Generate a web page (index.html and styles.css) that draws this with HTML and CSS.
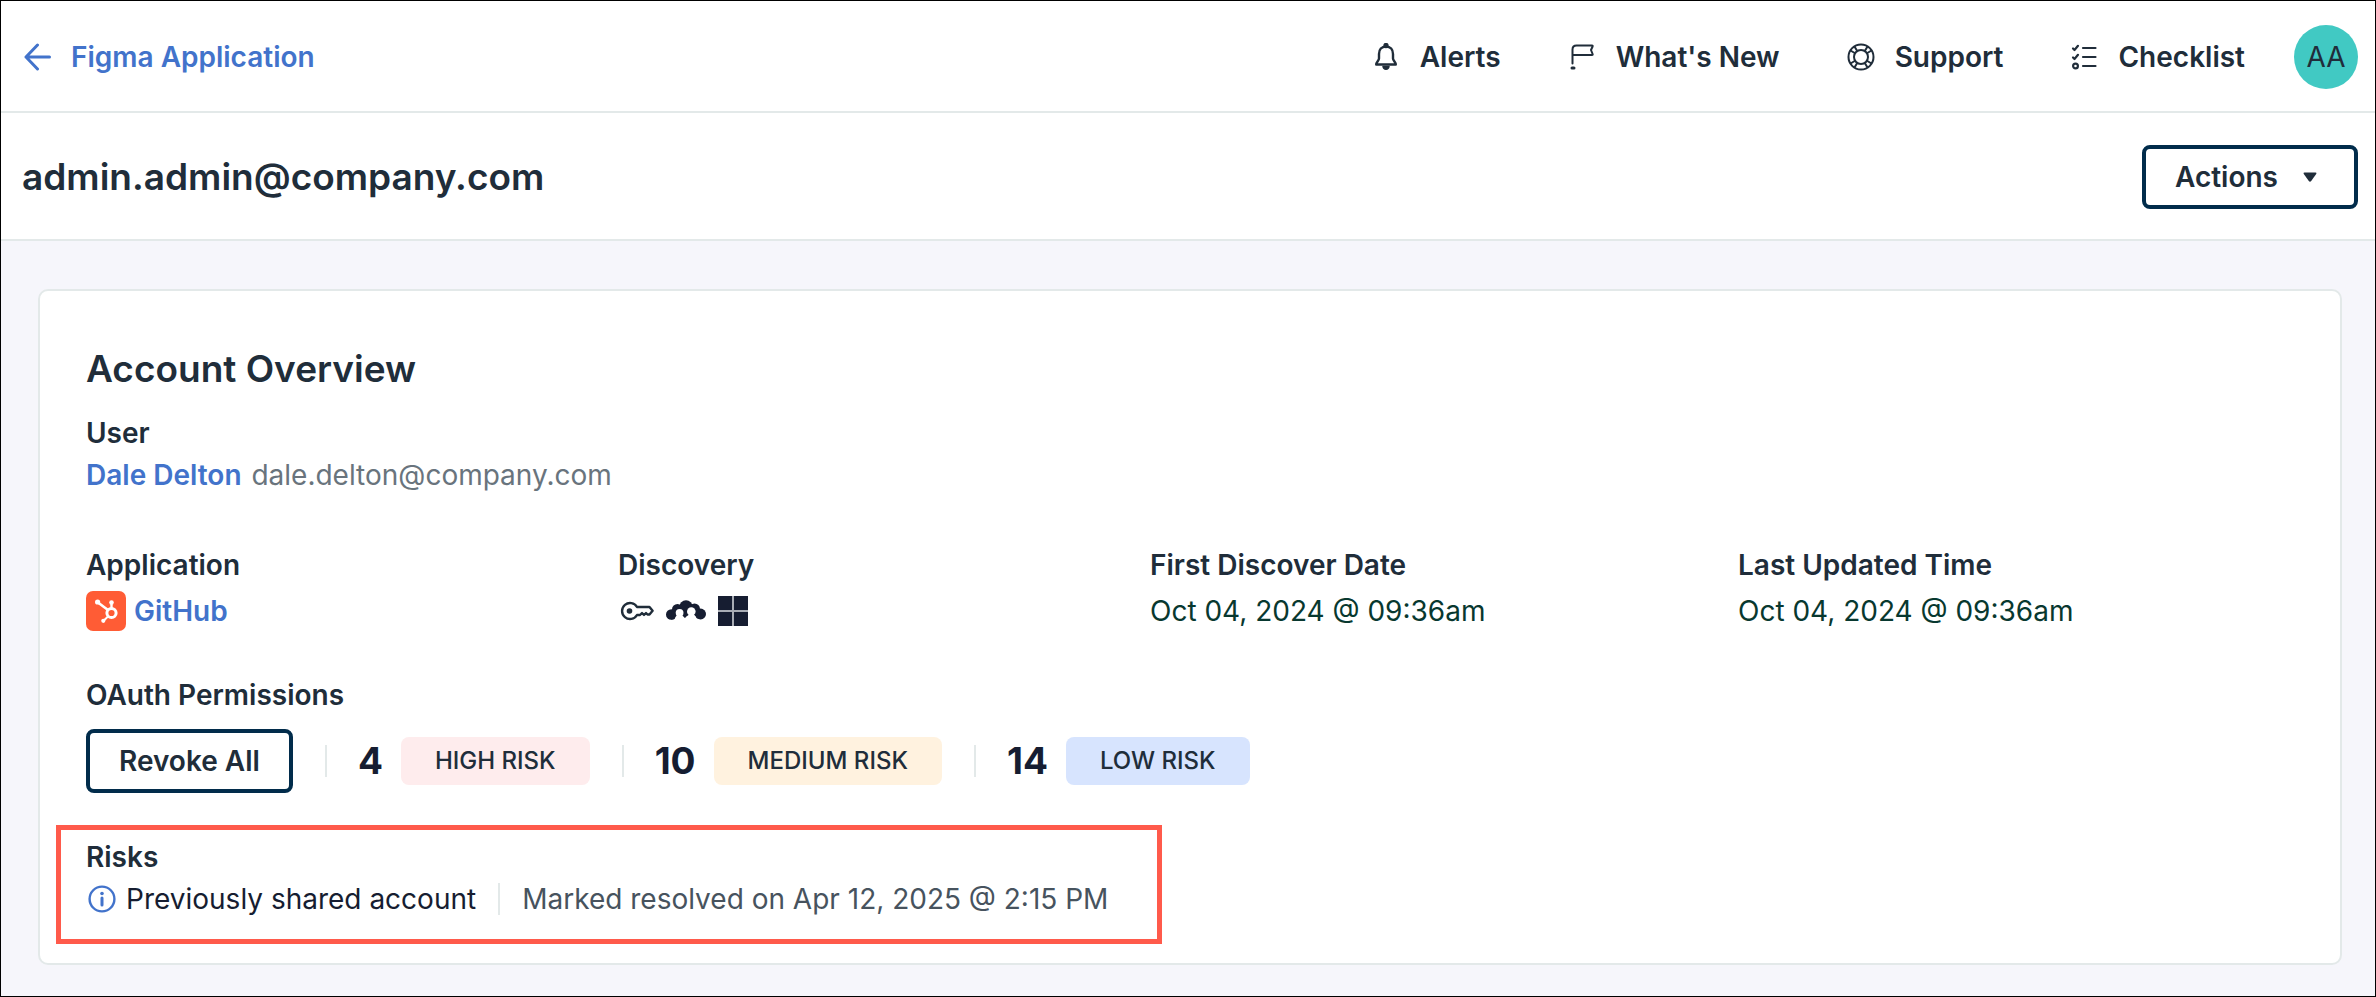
FILE: index.html
```html
<!DOCTYPE html>
<html lang="en">
<head>
<meta charset="utf-8">
<title>admin.admin@company.com</title>
<link rel="stylesheet" href="styles.css">
</head>
<body>
<header class="topbar">
  <a class="back" href="#">
    <svg class="icon" viewBox="0 0 28 28" fill="none" stroke="currentColor" stroke-width="3" stroke-linecap="round" stroke-linejoin="round" aria-hidden="true"><path d="M26.500 14H3M14.500 2 3 14 14.500 26"/></svg>
    Figma Application
  </a>
  <nav class="nav">
    <a class="nav-link" href="#">
      <svg class="icon" viewBox="0 0 28 28" fill="none" stroke="currentColor" stroke-width="2.400" stroke-linejoin="round" aria-hidden="true"><path d="M14 3.500c-4.500 0-7 3.200-7 7.500v4.500c0 2-2.800 3.500-2.800 6h19.600c0-2.500-2.800-4-2.800-6V11c0-4.300-2.500-7.500-7-7.500z"/><circle cx="14" cy="2.500" r="1.500" fill="currentColor"/><path d="M11 23.500h6c-.6 3.800-5.400 3.800-6 0z" fill="currentColor" stroke-width="1.500"/></svg>
      Alerts
    </a>
    <a class="nav-link" href="#">
      <svg class="icon" viewBox="0 0 28 28" fill="none" stroke="currentColor" stroke-width="2" stroke-linecap="round" stroke-linejoin="round" aria-hidden="true"><path d="M4.500 20.500V6.500Q4.500 2.500 8.500 2.500H24q1 0 .6 1l-1.600 3.500 1.600 4q.4 1-.6 1H5"/><path d="M4 25h2" stroke-width="3"/></svg>
      What's New
    </a>
    <a class="nav-link" href="#">
      <svg class="icon" viewBox="0 0 28 28" fill="none" stroke="currentColor" stroke-width="2" aria-hidden="true"><circle cx="14" cy="14" r="12.500"/><circle cx="14" cy="14" r="7"/><path d="M3.500 7.500l5 3M7.500 3.500l3 5M24.500 7.500l-5 3M20.500 3.500l-3 5M3.500 20.500l5-3M7.500 24.500l3-5M24.500 20.500l-5-3M20.500 24.500l-3-5"/></svg>
      Support
    </a>
    <a class="nav-link" href="#">
      <svg class="icon" viewBox="0 0 28 28" fill="none" stroke="currentColor" stroke-width="2.200" stroke-linecap="round" stroke-linejoin="round" aria-hidden="true"><path d="M13 5h12.500M13 14h12.500M13 23h12.500M3 5.500l1.500 1.500L8 2.800M3 14.500l1.500 1.500L8 11.800"/><circle cx="5.500" cy="23" r="2.400"/></svg>
      Checklist
    </a>
    <button class="avatar" type="button" aria-label="Account menu, AA">AA</button>
  </nav>
</header>

<div class="titlebar">
  <h1 class="title">admin.admin@company.com</h1>
  <button class="btn btn-actions" type="button">Actions
    <svg class="caret" viewBox="0 0 14 10" aria-hidden="true"><path d="M1.500.5h11q1.500 0 .7 1.400L8.200 9q-1.200 1.300-2.400 0L.8 1.900Q0 .5 1.500.5z" fill="currentColor"/></svg>
  </button>
</div>

<main class="main">
  <section class="card">
    <h2 class="card-title">Account Overview</h2>

    <h3 class="label">User</h3>
    <p class="user"><a class="link" href="#">Dale Delton</a> <span class="email">dale.delton@company.com</span></p>

    <div class="facts">
      <div class="fact">
        <h3 class="label">Application</h3>
        <div class="value app">
          <svg class="app-logo" viewBox="0 0 40 40" aria-hidden="true"><rect width="40" height="40" rx="7" fill="#ff5c35"/><g fill="none" stroke="#fff"><circle cx="25.500" cy="22" r="4.600" stroke-width="3"/><path d="M25.500 17.500V12" stroke-width="2.400"/><path d="M22 19 12 11.500" stroke-width="2.600"/><path d="M22 25.500 17.800 29.500" stroke-width="2"/></g><g fill="#fff"><circle cx="25.500" cy="11.500" r="2.300"/><circle cx="11.600" cy="11" r="2.600"/><circle cx="17.300" cy="29.800" r="2.100"/></g></svg>
          <a class="link" href="#">GitHub</a>
        </div>
      </div>
      <div class="fact">
        <h3 class="label">Discovery</h3>
        <div class="value sources">
          <svg class="key" viewBox="0 0 34 20" fill="none" stroke="#202d3a" stroke-width="2.400" stroke-linejoin="round" role="img" aria-label="Key"><path d="M17 6H29.500L32.600 9.800 29.500 13.500H27.500L26 12 24 14 22 12 20 14H17A8 8 0 1 1 17 6z"/><circle cx="9.500" cy="10" r="2.800" fill="#202d3a" stroke="none"/></svg>
          <svg class="cloud" viewBox="0 0 40 22" fill="currentColor" role="img" aria-label="Cloud directory"><circle cx="5.300" cy="14.500" r="5.300"/><circle cx="34.600" cy="14" r="5.400"/><circle cx="11.500" cy="9.500" r="5.500"/><circle cx="20" cy="7" r="6.700"/><circle cx="28.500" cy="9" r="5.500"/><path d="M6 9h28v9.500h-3L28 15l-7.500 1.500-1.500 1.500-2-1.500-6-1.500-2 4-4 .5z"/><g fill="#fff"><circle cx="13.600" cy="12.800" r="3.900"/><circle cx="25.300" cy="11.500" r="4.300"/><path d="M11 15.500h5.200q1.600 1.200 2 3V22H8.800v-3.500q.6-2 2.200-3zM22.500 15h5.600q1.800 1.200 2.200 3V22H19.800v-4q.8-2 2.700-3z"/></g></svg>
          <svg class="windows" viewBox="0 0 30 30" role="img" aria-label="Microsoft"><path fill="#a9adb5" d="M0 0h30v30H0z"/><path fill="currentColor" d="M0 0h14v14H0zM16 0h14v14H16zM0 16h14v14H0zM16 16h14v14H16z"/></svg>
        </div>
      </div>
      <div class="fact">
        <h3 class="label">First Discover Date</h3>
        <p class="value date">Oct 04, 2024 @ 09:36am</p>
      </div>
      <div class="fact">
        <h3 class="label">Last Updated Time</h3>
        <p class="value date">Oct 04, 2024 @ 09:36am</p>
      </div>
    </div>

    <h3 class="label">OAuth Permissions</h3>
    <div class="permissions">
      <button class="btn" type="button">Revoke All</button>
      <div class="risk"><span class="count">4</span><span class="badge high">HIGH RISK</span></div>
      <div class="risk"><span class="count">10</span><span class="badge medium">MEDIUM RISK</span></div>
      <div class="risk"><span class="count">14</span><span class="badge low">LOW RISK</span></div>
    </div>

    <div class="risks">
      <h3 class="label">Risks</h3>
      <p class="risk-item">
        <svg class="info" viewBox="0 0 28 28" fill="none" stroke="currentColor" aria-hidden="true"><circle cx="14" cy="14" r="12.400" stroke-width="2.400"/><path d="M14 13v7" stroke-width="3" stroke-linecap="round"/><circle cx="14" cy="8.500" r="1.800" fill="currentColor" stroke="none"/></svg>
        <span class="risk-name">Previously shared account</span>
        <span class="resolved">Marked resolved on Apr 12, 2025 @ 2:15 PM</span>
      </p>
    </div>
  </section>
</main>
</body>
</html>
```
FILE: styles.css
```css
*, *::before, *::after { box-sizing: border-box; }

:root {
  --ink: #202d3a;
  --deep: #161d31;
  --navy: #012c4b;
  --blue: #4273cb;
  --line: #e3e9e9;
}

body {
  margin: 0;
  min-height: 100vh;
  border: 1px solid #000;
  background: #f6f6fb;
  color: var(--ink);
  font: 400 28px/42px Inter, "Liberation Sans", sans-serif;
}

h1, h2, h3, p { margin: 0; }
a { color: inherit; text-decoration: none; }
svg { display: block; flex: none; }

.topbar, .titlebar {
  display: flex;
  align-items: center;
  justify-content: space-between;
  background: #fff;
  border-bottom: 2px solid var(--line);
}

.topbar { padding: 24px 17px 22px 22px; }
.titlebar { padding: 32px 17px 30px 21px; }

.icon { width: 28px; height: 28px; }

.back, .nav, .nav-link { display: flex; align-items: center; }
.back { gap: 20px; color: var(--blue); font-weight: 600; }
.nav { gap: 67px; }
.nav-link { gap: 20px; font-weight: 600; }

.avatar {
  width: 64px;
  height: 64px;
  margin-left: -18px;
  padding: 0;
  border: 0;
  border-radius: 50%;
  background: #41c9c3;
  color: var(--ink);
  font: inherit;
}

.title, .card-title { font-size: 37px; line-height: 54px; font-weight: 600; }

.btn {
  display: flex;
  align-items: center;
  height: 64px;
  padding: 0 29px;
  border: 4px solid var(--navy);
  border-radius: 8px;
  background: #fff;
  color: var(--ink);
  font: inherit;
  font-weight: 600;
}
.btn-actions { gap: 25px; padding-right: 37px; }
.caret { width: 14px; height: 10px; }

.main { padding: 48px 33px 31px 37px; }

.card {
  padding: 51px 46px 19px;
  border: 2px solid var(--line);
  border-radius: 10px;
  background: #fff;
}
.card-title { margin-bottom: 16px; }

.label { font-size: 28px; line-height: 42px; font-weight: 600; }
.link { color: var(--blue); font-weight: 600; }
.email { margin-left: 2px; color: #69747d; }

.facts {
  display: grid;
  grid-template-columns: 532fr 532fr 588fr 556fr;
  margin: 48px 0 42px;
}
.value { display: flex; align-items: center; height: 42px; margin-top: 4px; }
.app { gap: 8px; }
.app-logo { width: 40px; height: 40px; }
.sources { gap: 12px; padding-left: 2px; color: var(--deep); }
.key { width: 34px; height: 20px; }
.cloud { width: 40px; height: 22px; }
.windows { width: 30px; height: 30px; }
.date { color: #08382f; }

.permissions { display: flex; align-items: center; gap: 32px; margin-top: 13px; }
.risk { display: flex; align-items: center; color: var(--deep); }
.risk::before, .resolved::before {
  content: "";
  width: 2px;
  height: 32px;
  background: var(--line);
}
.risk::before { margin-right: 31px; }
.count { font-size: 37px; font-weight: 700; margin-right: 18px; }
.badge {
  height: 48px;
  padding: 0 34px;
  border-radius: 8px;
  color: var(--ink);
  font-size: 24px;
  line-height: 48px;
  font-weight: 500;
}
.high { background: #feeced; }
.medium { background: #fff2df; }
.low { background: #d7e4fe; }

.risks {
  width: fit-content;
  margin: 32px 0 0 -30px;
  padding: 6px 49px 19px 25px;
  border: 5px solid #ff5a4b;
}
.risk-item { display: flex; align-items: center; }
.info { width: 28px; height: 28px; margin: 0 10px 0 2px; color: var(--blue); }
.risk-name { color: var(--deep); }
.resolved { display: flex; align-items: center; gap: 22px; margin-left: 22px; color: #47535e; }
```
